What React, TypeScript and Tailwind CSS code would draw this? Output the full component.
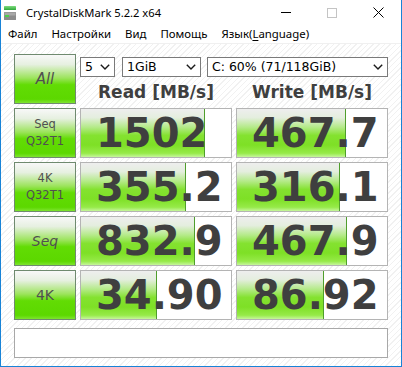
import type { FC } from 'react';

interface ResultRow {
  label: string[];
  read: string;
  write: string;
  readBar: number;
  writeBar: number;
  labelClass: string;
}

const rows: ResultRow[] = [
  { label: ['Seq', 'Q32T1'], read: '1502', write: '467.7', readBar: 124, writeBar: 109, labelClass: 'text-[11.5px] leading-[17px]' },
  { label: ['4K', 'Q32T1'], read: '355.2', write: '316.1', readBar: 105, writeBar: 103, labelClass: 'text-[11.5px] leading-[17px]' },
  { label: ['Seq'], read: '832.9', write: '467.9', readBar: 114, writeBar: 110, labelClass: 'text-[14px] italic' },
  { label: ['4K'], read: '34.90', write: '86.92', readBar: 76, writeBar: 87, labelClass: 'text-[14px]' },
];

const Chevron = () => (
  <svg width="10" height="6" viewBox="0 0 10 6" className="shrink-0">
    <path d="M0.8 0.8 L5 5 L9.2 0.8" fill="none" stroke="#1a1a1a" strokeWidth="1.4" />
  </svg>
);

const Dropdown: FC<{ value: string; width: string }> = ({ value, width }) => (
  <div className={`${width} h-[20px] bg-white border border-[#7a7a7a] flex items-center justify-between pl-[4px] pr-[4px] text-[12.5px] text-black`}>
    <span>{value}</span>
    <Chevron />
  </div>
);

const TestButton: FC<{ children: React.ReactNode; className?: string }> = ({ children, className }) => (
  <div
    className={`h-[50px] border border-[#6f8a6f] bg-[linear-gradient(to_bottom,#f8f8f8_0%,#e6f0e0_20%,#9ce45c_48%,#62dc04_62%,#5cd800_92%,#7ee430_100%)] flex flex-col items-center justify-center text-[#505050] ${className ?? ''}`}
  >
    {children}
  </div>
);

const ResultCell: FC<{ value: string; bar: number }> = ({ value, bar }) => (
  <div className="relative h-[50px] bg-white border border-[#b4b4b4] flex items-center pl-[15px]">
    {/* meter fill */}
    <div
      className="absolute left-0 top-0 bottom-0 border-r border-[#4f9e2c] bg-[linear-gradient(to_bottom,#eeeeee_0%,#e4eede_18%,#b4ea88_38%,#84e230_55%,#7ee026_75%,#96ea48_92%,#c6f69c_100%)]"
      style={{ width: bar }}
    />
    <span className="relative font-['DejaVu_Sans'] font-bold text-[40px] leading-none text-[#3f3f3f]">{value}</span>
  </div>
);

const AppIcon = () => (
  <svg width="12" height="15" viewBox="0 0 12 15">
    <defs>
      <linearGradient id="g1" x1="0" y1="0" x2="0" y2="1">
        <stop offset="0" stopColor="#7fdc7f" />
        <stop offset="1" stopColor="#2fa83a" />
      </linearGradient>
    </defs>
    <rect x="0" y="0" width="12" height="4" rx="0.5" fill="url(#g1)" />
    <rect x="0" y="6" width="12" height="8" rx="0.5" fill="#8c8c8c" />
    <rect x="0.5" y="6.5" width="11" height="3" fill="#a8a8a8" />
    <rect x="1" y="9" width="4" height="2" fill="#4cd04c" />
  </svg>
);

export default function App() {
  return (
    <div className="w-[402px] h-[367px] bg-white border-x border-b border-[#1883d7] flex flex-col overflow-hidden font-['DejaVu_Sans'] select-none">
      {/* title bar */}
      <div className="h-[25px] shrink-0 flex items-center">
        <div className="pl-[3px] pt-[1px] flex items-center">
          <AppIcon />
        </div>
        <span className="ml-[10px] font-['Noto_Sans'] text-[11.2px] text-black leading-none">CrystalDiskMark 5.2.2 x64</span>
        <div className="ml-auto flex h-full">
          <div className="w-[46px] flex items-center justify-center">
            <div className="w-[10px] h-px bg-black" />
          </div>
          <div className="w-[46px] flex items-center justify-center">
            <div className="w-[10px] h-[10px] border border-[#c4c4c4]" />
          </div>
          <div className="w-[46px] flex items-center justify-center">
            <svg width="11" height="11" viewBox="0 0 11 11">
              <path d="M0.5 0.5 L10.5 10.5 M10.5 0.5 L0.5 10.5" stroke="#000" strokeWidth="1" />
            </svg>
          </div>
        </div>
      </div>

      {/* menu bar */}
      <div className="h-[19px] shrink-0 flex items-center gap-[14px] pl-[7px] font-['Noto_Sans'] text-[11.4px] text-black border-b border-[#f0f0f0]">
        <span>Файл</span>
        <span>Настройки</span>
        <span>Вид</span>
        <span>Помощь</span>
        <span>
          Язык(<span className="underline underline-offset-2">L</span>anguage)
        </span>
      </div>

      {/* main area */}
      <div className="flex-1 px-[13px] pt-[10px] bg-[repeating-linear-gradient(135deg,#ffffff_0px,#ffffff_3px,#f1f1f1_3px,#f1f1f1_4px)]">
        <div className="grid grid-cols-[62px_152px_152px] gap-[4px]">
          <TestButton className="text-[15px] italic">All</TestButton>
          <div className="col-span-2 flex flex-col">
            <div className="flex mt-[3px]">
              <Dropdown value="5" width="w-[35px]" />
              <Dropdown value="1GiB" width="w-[79px] ml-[7px]" />
              <Dropdown value="C: 60% (71/118GiB)" width="w-[181px] ml-[6px]" />
            </div>
            <div className="flex gap-[4px] h-[27px] pt-[4px]">
              <div className="w-[152px] flex items-center justify-center font-bold text-[17px] text-[#3f3f3f]">Read [MB/s]</div>
              <div className="w-[152px] flex items-center justify-center font-bold text-[17px] text-[#3f3f3f]">Write [MB/s]</div>
            </div>
          </div>

          {rows.map(row => (
            <>
              <TestButton key={row.read + 'b'} className={row.labelClass}>
                {row.label.map(line => (
                  <span key={line}>{line}</span>
                ))}
              </TestButton>
              <ResultCell key={row.read + 'r'} value={row.read} bar={row.readBar} />
              <ResultCell key={row.read + 'w'} value={row.write} bar={row.writeBar} />
            </>
          ))}
        </div>

        {/* comment box */}
        <div className="mt-[8px] w-[374px] h-[30px] bg-white border border-[#a8a8a8]" />
      </div>
    </div>
  );
}
